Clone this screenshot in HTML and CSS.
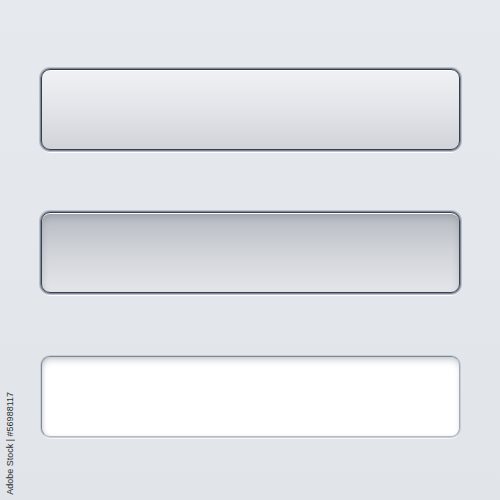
FILE: index.html
```html
<!DOCTYPE html>
<html lang="en">
<head>
    <meta charset="UTF-8">
    <meta name="viewport" content="width=device-width, initial-scale=1.0">
    <title>Input fields</title>
    <link rel="stylesheet" href="styles.css">
</head>
<body>
    <!-- Three field styles: raised, pressed, text input -->
    <div class="fields">
        <div class="field field-raised"></div>
        <div class="field field-pressed"></div>
        <div class="field field-input"></div>
    </div>

    <div class="credit">Adobe Stock | #56988117</div>
</body>
</html>
```
FILE: styles.css
```css
body {
    font-family: "Open Sans", "Liberation Sans", sans-serif;
    margin: 0;
    padding: 0;
    width: 500px;
    height: 500px;
    background: linear-gradient(180deg, #e6e9ed 0%, #e1e4e9 100%);
    overflow: hidden;
}
.fields {
    display: flex;
    flex-direction: column;
    gap: 62px;
    padding: 69px 0 0 41px;
}
.field {
    width: 417px;
    height: 79px;
    border-radius: 9px;
}
.field-raised {
    border: 1px solid #363d4a;
    background: linear-gradient(180deg, #eff1f4 0%, #e2e4e9 50%, #d0d3d8 100%);
    box-shadow:
        0 0 0 1px #7f8795,
        0 0 0 2px #bcc2cb,
        0 2px 0 1px #ffffff,
        inset 0 1px 0 #ffffff;
}
.field-pressed {
    border: 1px solid #3a4150;
    background: linear-gradient(180deg, #b6bac0 0%, #d1d4d9 50%, #e3e5e9 100%);
    box-shadow:
        0 0 0 1px #7f8795,
        0 0 0 2px #bcc2cb,
        0 2px 0 1px #ffffff,
        inset 0 1px 0 #ffffff,
        inset 0 4px 6px rgba(80, 88, 100, 0.25);
}
.field-input {
    margin-top: 1px;
    border: 1px solid #7f8899;
    border-bottom-color: #b3bac5;
    border-right-color: #a3abb8;
    background: #ffffff;
    box-shadow:
        0 0 0 1px #c9ced6,
        0 2px 0 0 #f4f5f7,
        inset 0 5px 6px -2px rgba(110, 120, 135, 0.35),
        inset 2px 0 3px rgba(110, 120, 135, 0.15);
}
.credit {
    position: absolute;
    left: 5px;
    bottom: 5px;
    writing-mode: vertical-rl;
    transform: rotate(180deg);
    font-family: "Liberation Sans", Arial, sans-serif;
    font-size: 9px;
    color: #2c2f33;
}
```
